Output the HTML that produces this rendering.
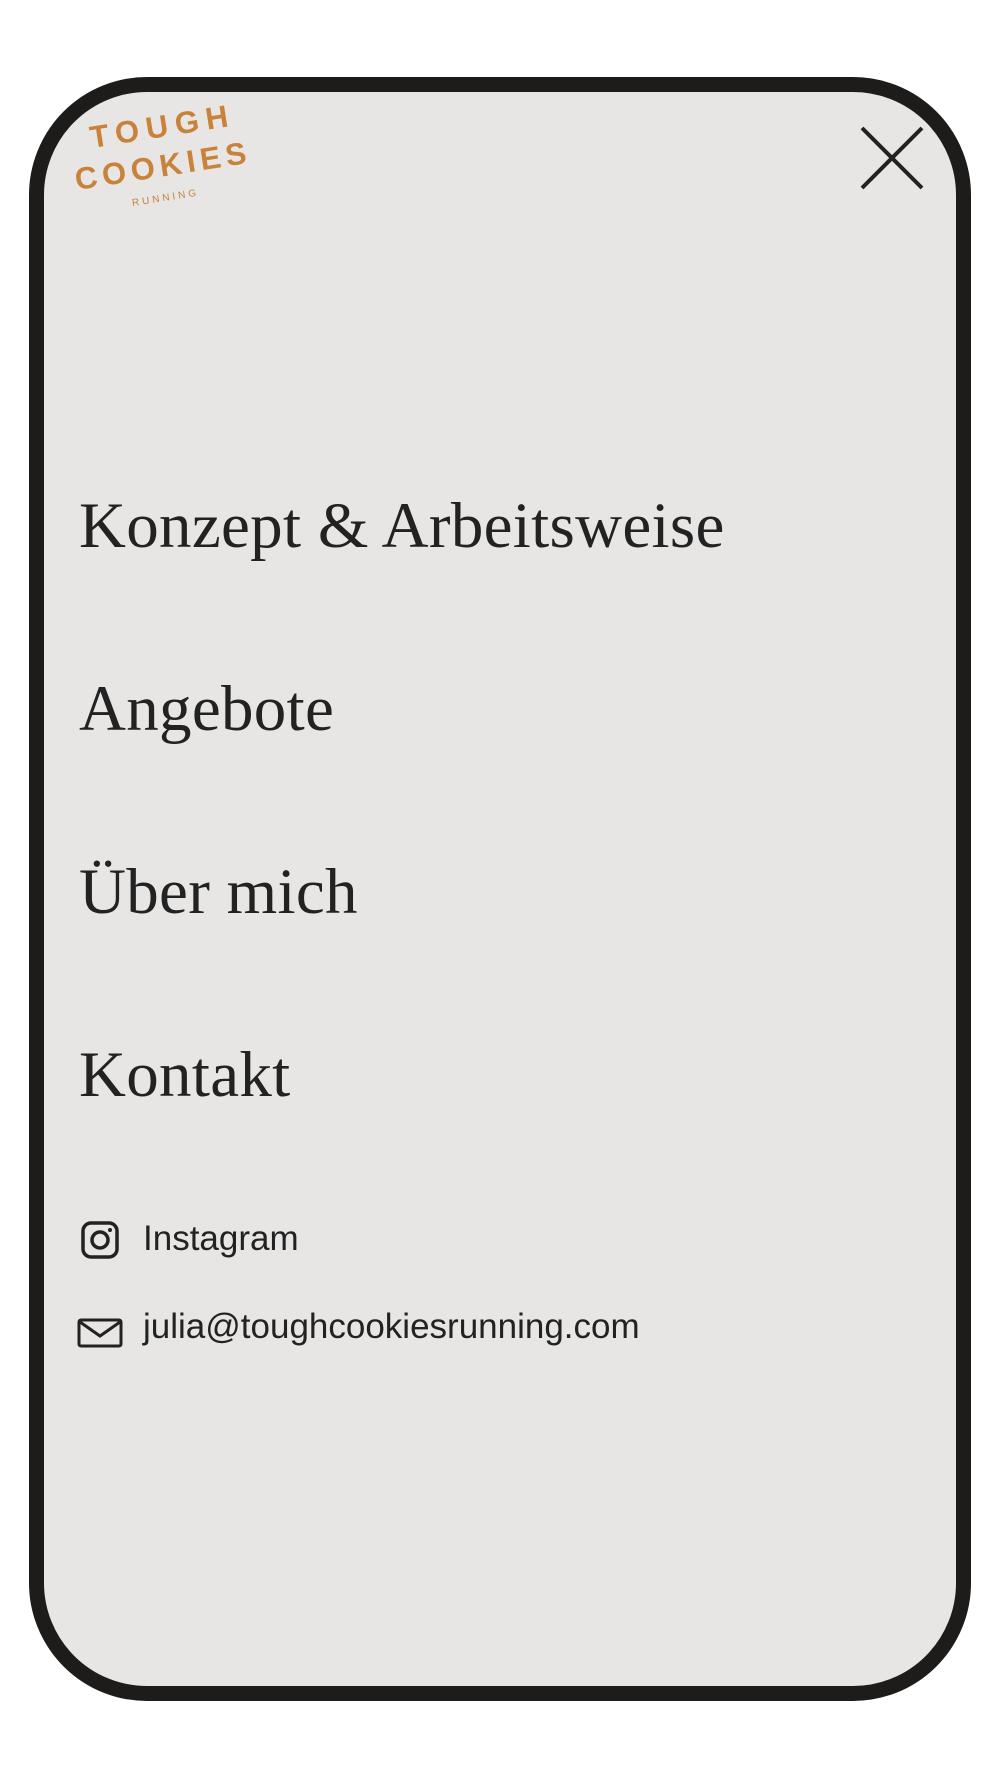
<!DOCTYPE html>
<html><head><meta charset="utf-8"><style>
html,body{margin:0;padding:0;background:#fff;}
body{width:1000px;height:1778px;position:relative;overflow:hidden;}
.frame{position:absolute;left:29px;top:77px;width:912px;height:1594px;border:15px solid #1e1c1b;border-radius:118px;background:#e7e6e4;}
.menu{position:absolute;left:79px;font-family:"Liberation Serif",serif;font-size:65px;color:#222;line-height:1;white-space:nowrap;letter-spacing:0.3px;}
.sm{position:absolute;left:143px;font-family:"Liberation Sans",sans-serif;font-size:35px;color:#222;line-height:1;white-space:nowrap;}
.logo{position:absolute;font-family:"Liberation Sans",sans-serif;font-weight:bold;color:#c8823a;white-space:nowrap;transform-origin:left bottom;}
</style></head><body>
<div class="frame"></div>
<div class="logo" style="left:93px;top:120px;font-size:31px;letter-spacing:7px;transform:rotate(-9deg);">TOUGH</div>
<div class="logo" style="left:78px;top:162px;font-size:31px;letter-spacing:5px;transform:rotate(-9deg);">COOKIES</div>
<div class="logo" style="left:133px;top:198px;font-size:10px;font-weight:normal;letter-spacing:3px;transform:rotate(-9deg);">RUNNING</div>
<svg style="position:absolute;left:858px;top:125px" width="68" height="66" viewBox="0 0 68 66"><path d="M4 3L64 63M64 3L4 63" stroke="#222" stroke-width="4" fill="none"/></svg>
<div class="menu" style="top:494px">Konzept &amp; Arbeitsweise</div>
<div class="menu" style="top:677px">Angebote</div>
<div class="menu" style="top:860px">Über mich</div>
<div class="menu" style="top:1043px">Kontakt</div>
<svg style="position:absolute;left:80px;top:1220px" width="40" height="40" viewBox="0 0 40 40"><rect x="3" y="3" width="34" height="34" rx="8" stroke="#222" stroke-width="3.5" fill="none"/><circle cx="20" cy="20" r="8" stroke="#222" stroke-width="3.5" fill="none"/><circle cx="30" cy="10" r="2" fill="#222"/></svg>
<div class="sm" style="top:1221px">Instagram</div>
<svg style="position:absolute;left:77px;top:1318px" width="46" height="30" viewBox="0 0 46 30"><rect x="2" y="2" width="42" height="26" rx="2" stroke="#222" stroke-width="3" fill="none"/><path d="M3 4L23 18L43 4" stroke="#222" stroke-width="3" fill="none"/></svg>
<div class="sm" style="top:1309px">julia@toughcookiesrunning.com</div>
</body></html>
